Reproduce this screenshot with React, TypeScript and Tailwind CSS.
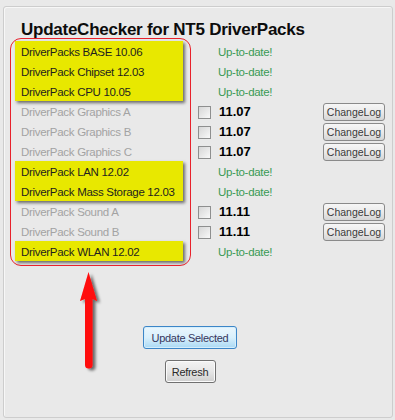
import React from "react";

type Row = { name: string; ok: boolean; ver?: string };

const rows: Row[] = [
  { name: "DriverPacks BASE 10.06", ok: true },
  { name: "DriverPack Chipset 12.03", ok: true },
  { name: "DriverPack CPU 10.05", ok: true },
  { name: "DriverPack Graphics A", ok: false, ver: "11.07" },
  { name: "DriverPack Graphics B", ok: false, ver: "11.07" },
  { name: "DriverPack Graphics C", ok: false, ver: "11.07" },
  { name: "DriverPack LAN 12.02", ok: true },
  { name: "DriverPack Mass Storage 12.03", ok: true },
  { name: "DriverPack Sound A", ok: false, ver: "11.11" },
  { name: "DriverPack Sound B", ok: false, ver: "11.11" },
  { name: "DriverPack WLAN 12.02", ok: true },
];

function groups(list: Row[]) {
  const out: { ok: boolean; items: Row[] }[] = [];
  for (const r of list) {
    const last = out[out.length - 1];
    if (last && last.ok === r.ok) last.items.push(r);
    else out.push({ ok: r.ok, items: [r] });
  }
  return out;
}

const UI = { fontFamily: '"Liberation Sans", Arial, sans-serif' };

export default function App() {
  return (
    <div className="relative w-[395px] h-[420px] bg-[#e9e9e9] overflow-hidden" style={UI}>
      <div className="ml-[3px] mt-[6px] w-[390px] h-[412px] border border-[#cdcdcd] rounded-[3px] shadow-[inset_1px_1px_0_#f7f7f7] flex flex-col">
        <div className="pt-[11px] h-[34px] pl-[17px]">
          <div className="text-[17px] leading-[23px] font-bold tracking-[-0.25px] text-[#0c0c0c] whitespace-nowrap">
            UpdateChecker for NT5 DriverPacks
          </div>
        </div>
        <div className="flex pl-[11px]">
          <div className="w-[168px] flex flex-col">
            {groups(rows).map((g, gi) => (
              <div
                key={gi}
                className={g.ok ? "bg-[#e8e800] shadow-[2px_2px_3px_rgba(0,0,0,0.55)]" : ""}
              >
                {g.items.map((r) => (
                  <div
                    key={r.name}
                    className={
                      "h-[20px] pl-[6px] pt-[2px] text-[11.5px] tracking-[-0.3px] leading-[18px] whitespace-nowrap " +
                      (g.ok ? "text-[#1e1e1e]" : "text-[#a3a3a3]")
                    }
                  >
                    {r.name}
                  </div>
                ))}
              </div>
            ))}
          </div>
          <div className="ml-[15px] flex flex-col">
            {rows.map((r) => (
              <div key={r.name} className="h-[20px] flex items-center">
                <div className="w-[20px] flex items-center">
                  {!r.ok && (
                    <div className="w-[13px] h-[13px] mt-[2px] border border-[#8e8f8f] bg-gradient-to-br from-[#d6d6d6] to-[#f9f9f9]" />
                  )}
                </div>
                {r.ok ? (
                  <div className="text-[11.5px] tracking-[-0.3px] leading-[18px] pt-[2px] text-[#3a9a55] whitespace-nowrap">
                    Up-to-date!
                  </div>
                ) : (
                  <>
                    <div className="w-[105px] pl-[1px] text-[13px] leading-[18px] pt-[2px] font-bold text-black">
                      {r.ver}
                    </div>
                    <button className="w-[62px] h-[18px] mt-[1px] rounded-[3px] border border-[#8a8a8a] bg-gradient-to-b from-[#f6f6f6] via-[#ebebeb] to-[#d5d5d5] text-[10.5px] leading-[14px] text-[#3a3a3a] flex items-center justify-center whitespace-nowrap">
                      ChangeLog
                    </button>
                  </>
                )}
              </div>
            ))}
          </div>
        </div>
        <div className="w-[372px] flex flex-col items-center mt-[65px]">
          <button className="w-[94px] h-[23px] rounded-[3px] border border-[#3c86c8] bg-gradient-to-b from-[#eaf6fd] via-[#d9f0fc] to-[#a9d9f4] shadow-[inset_0_0_0_1px_#d6eefb] text-[11px] tracking-[-0.3px] leading-[16px] text-[#36365c] flex items-center justify-center whitespace-nowrap">
            Update Selected
          </button>
          <button className="mt-[11px] w-[51px] h-[23px] rounded-[3px] border border-[#707070] bg-gradient-to-b from-[#f3f3f3] via-[#e6e6e6] to-[#cfcfcf] shadow-[inset_0_0_0_1px_#fbfbfb] text-[11px] tracking-[-0.3px] leading-[16px] text-[#2a2a2a] flex items-center justify-center whitespace-nowrap">
            Refresh
          </button>
        </div>
      </div>

      <div className="absolute left-[10px] top-[38px] w-[181px] h-[228px] rounded-[11px] border-[1.5px] border-[#e8222c] pointer-events-none" />

      <svg className="absolute left-[74px] top-[268px]" width="32" height="106" viewBox="0 0 32 106">
        <defs>
          <filter id="sh" x="-50%" y="-20%" width="200%" height="140%">
            <feGaussianBlur in="SourceAlpha" stdDeviation="1.5" />
            <feOffset dx="2.5" dy="2" result="b" />
            <feComponentTransfer>
              <feFuncA type="linear" slope="0.55" />
            </feComponentTransfer>
            <feMerge>
              <feMergeNode />
              <feMergeNode in="SourceGraphic" />
            </feMerge>
          </filter>
        </defs>
        <path
          d="M14.5 4 L23 33 L18.5 31 L18.5 97 Q18.5 100.5 14.8 100.5 Q11 100.5 11 97 L11 31 L6 33 Z"
          fill="#ff0a0a"
          filter="url(#sh)"
        />
      </svg>
    </div>
  );
}
